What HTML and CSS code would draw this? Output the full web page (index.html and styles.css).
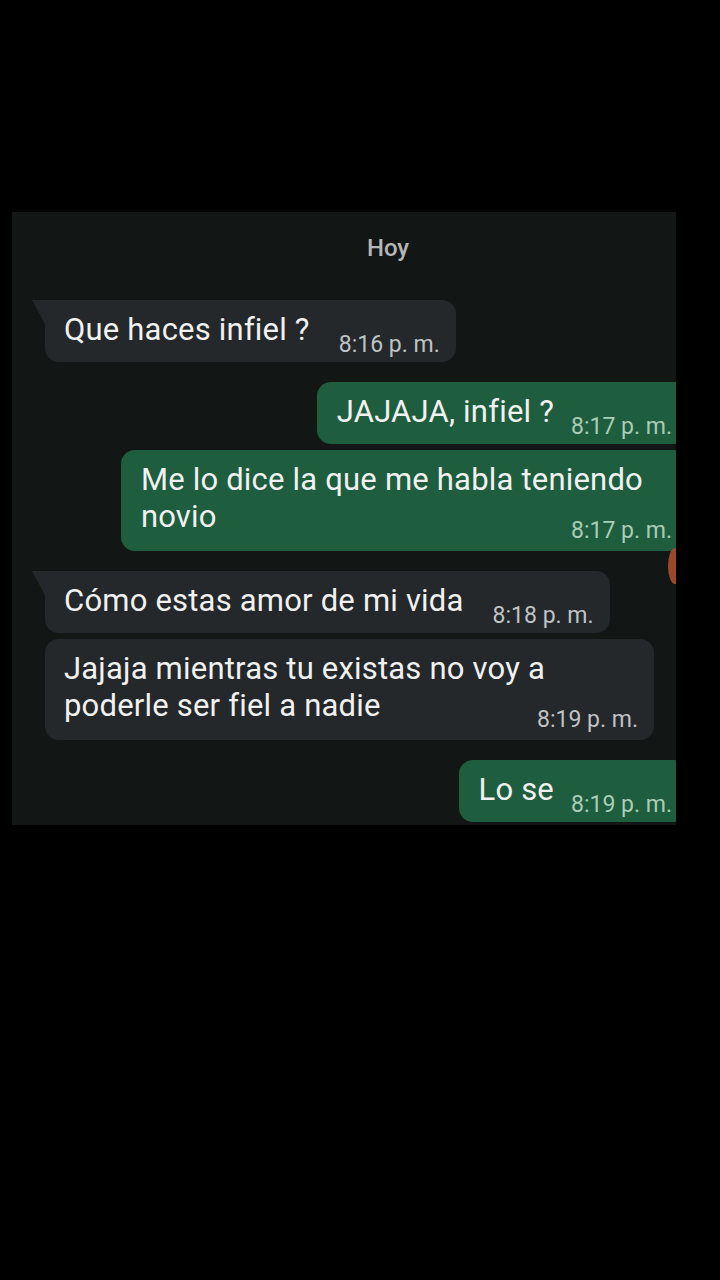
FILE: index.html
```html
<!DOCTYPE html>
<html lang="es">

<head>
    <meta charset="UTF-8">
    <meta name="viewport" content="width=device-width, initial-scale=1.0">
    <title>Chat</title>
    <link rel="stylesheet" href="styles.css">
</head>

<body>
    <div class="chat">
        <div class="day">Hoy</div>

        <!-- recibido -->
        <div class="bubble in tail">
            <span class="text">Que haces infiel ?</span>
            <span class="time">8:16 p. m.</span>
        </div>

        <!-- enviados -->
        <div class="bubble out first">
            <span class="text">JAJAJA, infiel ?</span>
            <span class="time">8:17 p. m.</span>
        </div>
        <div class="bubble out multi next">
            <span class="text">Me lo dice la que me habla teniendo<br>novio</span>
            <span class="time">8:17 p. m.</span>
        </div>

        <div class="bubble in tail first">
            <span class="text">Cómo estas amor de mi vida</span>
            <span class="time">8:18 p. m.</span>
        </div>
        <div class="bubble in multi next">
            <span class="text">Jajaja mientras tu existas no voy a<br>poderle ser fiel a nadie</span>
            <span class="time">8:19 p. m.</span>
        </div>

        <div class="bubble out first">
            <span class="text">Lo se</span>
            <span class="time">8:19 p. m.</span>
        </div>

        <span class="finger"></span>
    </div>
</body>

</html>
```

FILE: styles.css
```css
body {
    background: #000;
    margin: 0;
    font-family: Roboto, "Noto Sans", sans-serif;
}

.chat {
    position: relative;
    box-sizing: border-box;
    width: 664px;
    height: 613px;
    margin: 212px 0 0 12px;
    padding: 0 0 0 33px;
    background: #121614;
    overflow: hidden;
    display: flex;
    flex-direction: column;
}

.day {
    padding: 24px 0 0 55px;
    margin-bottom: 40px;
    text-align: center;
    color: #b5b7b7;
    font-size: 24px;
    font-weight: 500;
    line-height: 24px;
}

.bubble {
    position: relative;
    display: flex;
    align-items: flex-end;
    padding: 11px 16px 5px 19px;
    border-radius: 14px;
    color: #f1f1f1;
}

.bubble .text {
    font-size: 31px;
    line-height: 37px;
    letter-spacing: 0.2px;
    margin-bottom: 9px;
}

.bubble .time {
    font-size: 23px;
    line-height: 24px;
    white-space: nowrap;
}

.in {
    align-self: flex-start;
    gap: 29px;
    background: #24282a;
}

.in .time {
    color: #bfc3c4;
}

.out {
    align-self: flex-end;
    gap: 17px;
    margin-right: -12px;
    padding-left: 20px;
    background: #1e5d3e;
}

.out .time {
    color: #a9cdb7;
}

.first {
    margin-top: 20px;
}

.next {
    margin-top: 6px;
}

.day + .bubble {
    margin-top: 0;
}

.tail {
    border-top-left-radius: 0;
}

.tail::before {
    content: "";
    position: absolute;
    left: -13px;
    top: 0;
    border-top: 24px solid #24282a;
    border-left: 13px solid transparent;
}

/* mensajes de dos lineas: la hora queda abajo a la derecha */
.multi {
    display: block;
    padding-bottom: 8px;
}

.multi .text {
    display: block;
    margin-bottom: 0;
}

.out.multi .text {
    padding-right: 29px;
}

.in.multi .text {
    padding-right: 93px;
}

.multi .time {
    display: block;
    text-align: right;
    margin-top: -16px;
}

.finger {
    position: absolute;
    right: -6px;
    top: 336px;
    width: 14px;
    height: 36px;
    border-radius: 50%;
    background: #9a4a2a;
}
```
